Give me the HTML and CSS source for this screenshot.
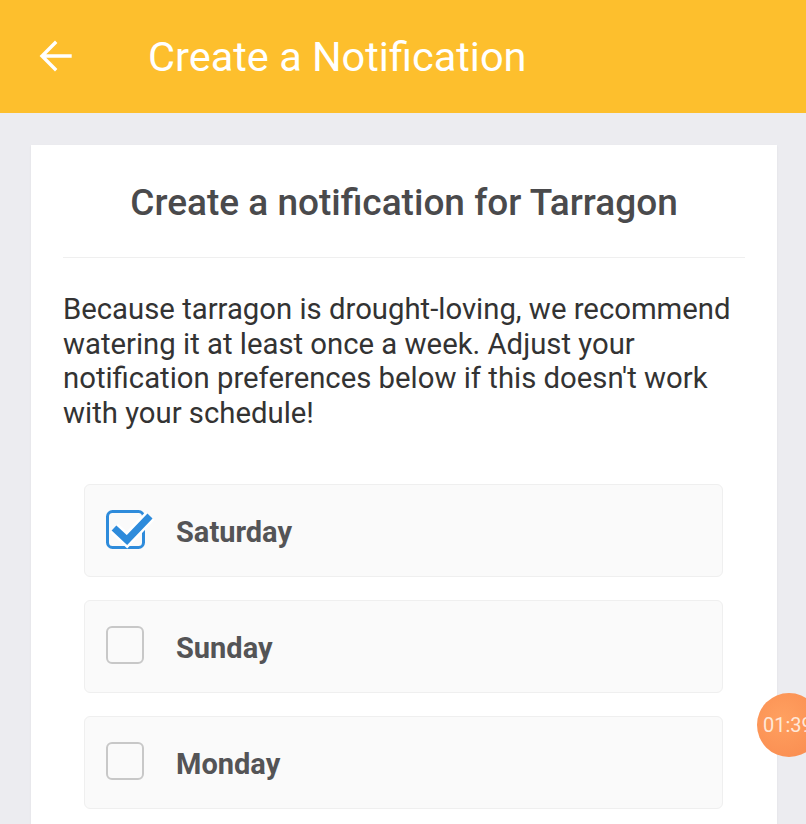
FILE: index.html
```html
<!DOCTYPE html>
<html>
<head>
<meta charset="utf-8">
<link rel="stylesheet" href="styles.css">
</head>
<body>
<header class="appbar">
  <svg class="back" width="34" height="34" viewBox="0 0 34 34"><path d="M32 17H5M17 4L4 17l13 13" fill="none" stroke="#fff" stroke-width="3.4" stroke-linecap="square"/></svg>
  <h1 class="appbar-title">Create a Notification</h1>
</header>
<main class="content">
  <section class="card">
    <h2 class="card-title">Create a notification for Tarragon</h2>
    <hr class="divider">
    <p class="intro">Because tarragon is drought-loving, we recommend watering it at least once a week. Adjust your notification preferences below if this doesn't work with your schedule!</p>
    <ul class="days">
      <li class="day">
        <span class="box checked"><svg width="48" height="40" viewBox="0 0 48 40"><rect x="1.5" y="1.5" width="36" height="36" rx="5" fill="none" stroke="#2E8BDB" stroke-width="3"/><path d="M8 18l13 12L44 6" fill="none" stroke="#fff" stroke-width="12"/><path d="M8 18l13 12L44 6" fill="none" stroke="#2E8BDB" stroke-width="7"/></svg></span>
        <span class="day-label">Saturday</span>
      </li>
      <li class="day">
        <span class="box"></span>
        <span class="day-label">Sunday</span>
      </li>
      <li class="day">
        <span class="box"></span>
        <span class="day-label">Monday</span>
      </li>
    </ul>
  </section>
</main>
<div class="timer">01:39</div>
</body>
</html>
```
FILE: styles.css
```css
html, body {
  margin: 0;
  padding: 0;
  background: #ececf0;
  font-family: Roboto, "Liberation Sans", sans-serif;
  overflow: hidden;
  height: 824px;
}
.appbar {
  height: 113px;
  background: #fdbf2d;
  display: flex;
  align-items: center;
  box-sizing: border-box;
  padding-left: 38px;
}
.back {
  display: block;
  margin-right: 76px;
  margin-top: -2px;
}
.appbar-title {
  margin: 0;
  font-weight: 400;
  font-size: 41.5px;
  color: #fff;
}
.content {
  padding: 32px 29px 0 31px;
}
.card {
  background: #fff;
  padding: 30px 32px 0;
  height: 679px;
  box-sizing: border-box;
  overflow: hidden;
  box-shadow: 0 1px 2px rgba(0,0,0,0.06);
}
.card-title {
  margin: 0;
  text-align: center;
  font-size: 37px;
  font-weight: 500;
  color: #4a4a4c;
  line-height: 56px;
}
.divider {
  border: 0;
  border-top: 1.5px solid #efefef;
  margin: 26px 0 0;
}
.intro {
  margin: 34px 0 0;
  font-size: 29.3px;
  line-height: 34.6px;
  color: #333;
}
.days {
  list-style: none;
  margin: 54px 22px 0 21px;
  padding: 0;
  display: flex;
  flex-direction: column;
  gap: 23px;
}
.day {
  height: 93px;
  flex: none;
  box-sizing: border-box;
  background: #fafafa;
  border: 1px solid #efefef;
  border-radius: 6px;
  display: flex;
  align-items: center;
  padding-left: 21px;
}
.box {
  width: 38px;
  height: 38px;
  flex: none;
  box-sizing: border-box;
  border: 2.5px solid #c8c8c8;
  border-radius: 6px;
  margin-right: 32px;
  margin-top: -4px;
  position: relative;
}
.box.checked {
  border: 0;
}
.box.checked svg {
  position: absolute;
  left: 0;
  top: 0;
}
.day-label {
  font-size: 29px;
  font-weight: 700;
  color: #545456;
  padding-top: 3px;
}
.timer {
  position: absolute;
  left: 757px;
  top: 693px;
  width: 64px;
  height: 64px;
  border-radius: 50%;
  background: radial-gradient(circle at 40% 40%, #ffa060, #f98a4e);
  color: #ffe8d8;
  font-size: 20px;
  line-height: 64px;
  padding-left: 6px;
  box-sizing: border-box;
  white-space: nowrap;
}
```
